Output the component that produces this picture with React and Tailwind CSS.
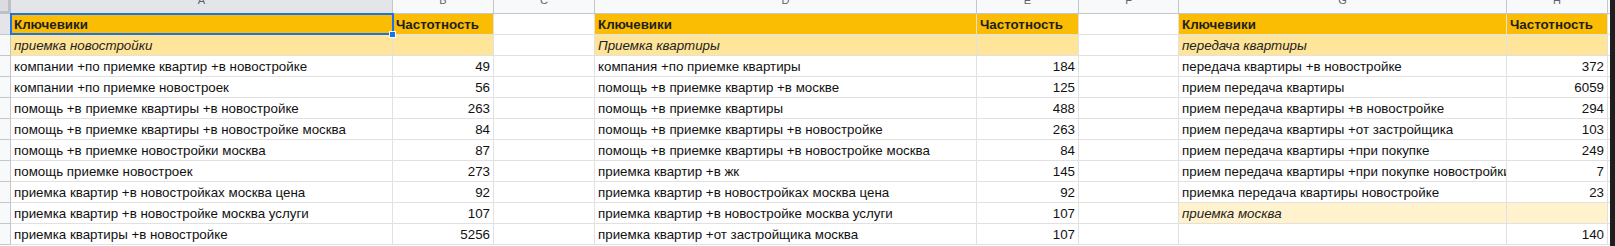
import React from 'react';

const left = [
  ['Ключевики', 'Частотность', 'h'],
  ['приемка новостройки', '', 's'],
  ['компании +по приемке квартир +в новостройке', '49', 'd'],
  ['компании +по приемке новостроек', '56', 'd'],
  ['помощь +в приемке квартиры +в новостройке', '263', 'd'],
  ['помощь +в приемке квартиры +в новостройке москва', '84', 'd'],
  ['помощь +в приемке новостройки москва', '87', 'd'],
  ['помощь приемке новостроек', '273', 'd'],
  ['приемка квартир +в новостройках москва цена', '92', 'd'],
  ['приемка квартир +в новостройке москва услуги', '107', 'd'],
  ['приемка квартиры +в новостройке', '5256', 'd'],
];

const middle = [
  ['Ключевики', 'Частотность', 'h'],
  ['Приемка квартиры', '', 's'],
  ['компания +по приемке квартиры', '184', 'd'],
  ['помощь +в приемке квартир +в москве', '125', 'd'],
  ['помощь +в приемке квартиры', '488', 'd'],
  ['помощь +в приемке квартиры +в новостройке', '263', 'd'],
  ['помощь +в приемке квартиры +в новостройке москва', '84', 'd'],
  ['приемка квартир +в жк', '145', 'd'],
  ['приемка квартир +в новостройках москва цена', '92', 'd'],
  ['приемка квартир +в новостройке москва услуги', '107', 'd'],
  ['приемка квартир +от застройщика москва', '107', 'd'],
];

const right = [
  ['Ключевики', 'Частотность', 'h'],
  ['передача квартиры', '', 's'],
  ['передача квартиры +в новостройке', '372', 'd'],
  ['прием передача квартиры', '6059', 'd'],
  ['прием передача квартиры +в новостройке', '294', 'd'],
  ['прием передача квартиры +от застройщика', '103', 'd'],
  ['прием передача квартиры +при покупке', '249', 'd'],
  ['прием передача квартиры +при покупке новостройки', '7', 'd'],
  ['приемка передача квартиры новостройке', '23', 'd'],
  ['приемка москва', '', 's2'],
  ['', '140', 'd'],
];

const fills = {
  h: 'bg-[#fbbc04] font-bold text-[#1f1f1f]',
  s: 'bg-[#ffe599] italic text-[#222]',
  s2: 'bg-[#fff2cc] italic text-[#222]',
  d: 'bg-white text-[#111]',
};

const cellBase =
  'h-[21px] shrink-0 border-r border-b border-[#e1e1e1] overflow-hidden whitespace-nowrap leading-[16px] pt-[3px] px-[3px]';

function KeyCell({ width, text, kind }) {
  return <div className={`${cellBase} ${width} ${fills[kind]}`}>{text}</div>;
}

function NumCell({ width, text, kind }) {
  const align = kind === 'h' ? 'text-left' : 'text-right';
  return <div className={`${cellBase} ${width} ${fills[kind]} ${align}`}>{text}</div>;
}

function EmptyCell({ width }) {
  return <div className={`${cellBase} ${width} bg-white`} />;
}

function ColHeader({ width, label, active }) {
  return (
    <div
      className={`h-[14px] shrink-0 border-r border-b border-[#c4c7c5] overflow-hidden flex justify-center ${width} ${
        active ? 'bg-[#e3e5e8]' : 'bg-[#f8f9fa]'
      }`}
    >
      <span className="text-[11px] leading-[11px] -mt-[5px] text-[#5f6368]">{label}</span>
    </div>
  );
}

export default function App() {
  const headers = [
    ['w-[382px]', 'A', true],
    ['w-[101px]', 'B'],
    ['w-[101px]', 'C'],
    ['w-[382px]', 'D'],
    ['w-[102px]', 'E'],
    ['w-[100px]', 'F'],
    ['w-[328px]', 'G'],
    ['w-[101px]', 'H'],
  ];

  return (
    <div className="w-[1615px] h-[246px] overflow-hidden bg-white flex font-['Liberation_Sans',Arial,sans-serif] text-[13.33px]">
      <div className="relative flex flex-col w-[1610px] shrink-0">
        {/* column letters */}
        <div className="flex">
          <div className="w-[11px] h-[14px] shrink-0 bg-[#dadce0] border-r-[3px] border-b-[3px] border-[#bdc1c6]" />
          {headers.map(([w, l, a]) => (
            <ColHeader key={l} width={w} label={l} active={a} />
          ))}
          <div className="h-[14px] flex-1 bg-[#f8f9fa] border-b border-[#c4c7c5]" />
        </div>

        {left.map((row, i) => (
          <div key={i} className="flex">
            <div
              className={`w-[11px] h-[21px] shrink-0 border-r border-b border-[#c4c7c5] ${
                i === 0 ? 'bg-[#e3e5e8]' : 'bg-[#f8f9fa]'
              }`}
            />
            <KeyCell width="w-[382px]" text={row[0]} kind={row[2]} />
            <NumCell width="w-[101px]" text={row[1]} kind={row[2]} />
            <EmptyCell width="w-[101px]" />
            <KeyCell width="w-[382px]" text={middle[i][0]} kind={middle[i][2]} />
            <NumCell width="w-[102px]" text={middle[i][1]} kind={middle[i][2]} />
            <EmptyCell width="w-[100px]" />
            <KeyCell width="w-[328px]" text={right[i][0]} kind={right[i][2]} />
            <NumCell width="w-[101px]" text={right[i][1]} kind={right[i][2]} />
            <div className="h-[21px] flex-1 border-b border-[#e1e1e1] bg-white" />
          </div>
        ))}

        {/* selection on A1 */}
        <div className="absolute left-[10px] top-[13px] w-[384px] h-[22px] border-2 border-[#1a73e8] pointer-events-none" />
        <div className="absolute left-[389px] top-[31px] w-[7px] h-[7px] bg-[#1a73e8] border border-white pointer-events-none" />
      </div>
      <div className="flex-1 bg-[#1e1e1e]" />
    </div>
  );
}
